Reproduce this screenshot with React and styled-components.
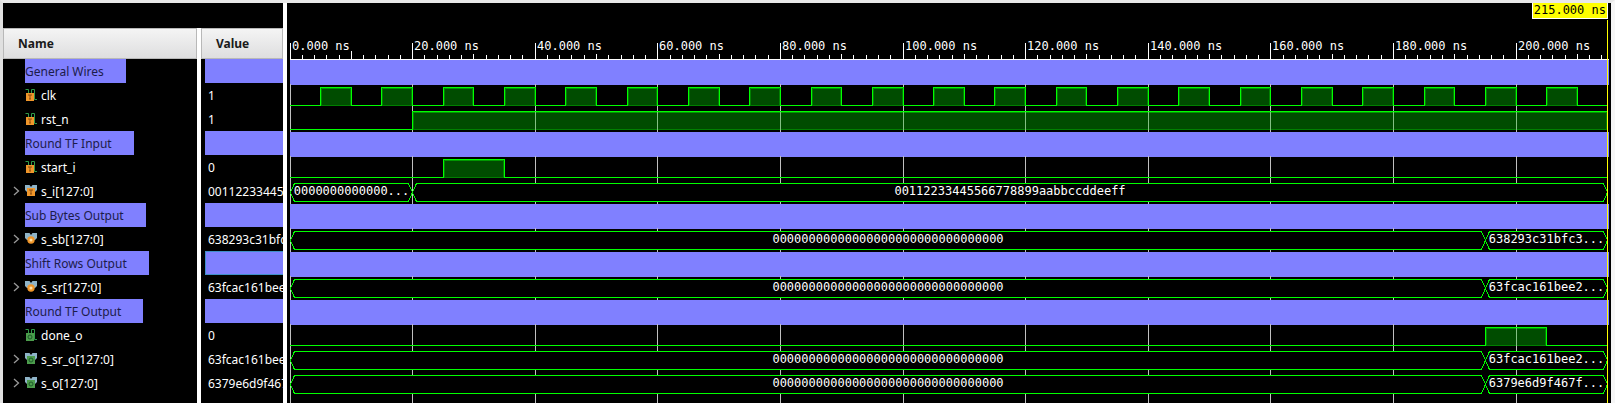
import React, { useLayoutEffect, useRef, useState } from "react";
import styled, { createGlobalStyle, css } from "styled-components";

const END = 215;
const LANE = 24;
const HIGH = 3;
const LOW = 21;
const CHAR = 7;

const clock = Array.from({ length: 42 }, (_, i) => [5 + i * 5, i % 2 === 0 ? 1 : 0]);
const zeros = "0".repeat(32);

const rows = [
  { kind: "group", name: "General Wires" },
  { kind: "wire", name: "clk", dir: "in", value: "1", edges: clock },
  { kind: "wire", name: "rst_n", dir: "in", value: "1", edges: [[20, 1]] },
  { kind: "group", name: "Round TF Input" },
  { kind: "wire", name: "start_i", dir: "in", value: "0", edges: [[25, 1], [35, 0]] },
  {
    kind: "bus", name: "s_i[127:0]", dir: "in", value: "00112233445",
    spans: [[0, 20, zeros], [20, END, "00112233445566778899aabbccddeeff"]],
  },
  { kind: "group", name: "Sub Bytes Output" },
  {
    kind: "bus", name: "s_sb[127:0]", dir: "local", value: "638293c31bfc",
    spans: [[0, 195, zeros], [195, END, "638293c31bfc3000000"]],
  },
  { kind: "group", name: "Shift Rows Output", focused: true },
  {
    kind: "bus", name: "s_sr[127:0]", dir: "local", value: "63fcac161bee",
    spans: [[0, 195, zeros], [195, END, "63fcac161bee2000000"]],
  },
  { kind: "group", name: "Round TF Output" },
  { kind: "wire", name: "done_o", dir: "out", value: "0", edges: [[195, 1], [205, 0]] },
  {
    kind: "bus", name: "s_sr_o[127:0]", dir: "out", value: "63fcac161bee",
    spans: [[0, 195, zeros], [195, END, "63fcac161bee2000000"]],
  },
  {
    kind: "bus", name: "s_o[127:0]", dir: "out", value: "6379e6d9f467",
    spans: [[0, 195, zeros], [195, END, "6379e6d9f467f000000"]],
  },
];

const GlobalStyle = createGlobalStyle`
  * { box-sizing: border-box; }
  body { margin: 0; background: #f0f0f0; font-family: "Noto Sans", sans-serif; }
`;

const Window = styled.main`
  display: flex;
  min-height: 100vh;
  border-top: 3px solid #e8e8e8;
  border-left: 3px solid #e0e0e0;
  border-right: 4px solid #f6f6f6;
  background: #fff;
  gap: 4px;
`;

const SignalPanel = styled.section`
  display: flex;
  flex: 0 0 280px;
  min-width: 0;
  padding-top: 25px;
  background: #000;
`;

const SignalTable = styled.table`
  width: 100%;
  table-layout: fixed;
  border-collapse: separate;
  border-spacing: 0;
  color: #fff;
  font-size: 12px;
  line-height: 26px;
`;

const HeadCell = styled.th`
  width: ${(p) => (p.$wide ? "194px" : "auto")};
  height: 31px;
  padding: 0;
  border-left: ${(p) => (p.$wide ? "0" : "4px solid #fff")};
  text-align: left;
`;

const HeadLabel = styled.div`
  height: 31px;
  padding-left: 14px;
  border: 1px solid #b8b8b8;
  background: linear-gradient(#f4f4f4, #dededf);
  color: #1a1a1a;
  font-weight: 700;
  line-height: 29px;
`;

const NameCell = styled.td`
  height: ${LANE}px;
  padding: 0;
`;

const NameBox = styled.div`
  display: flex;
  align-items: center;
  height: ${LANE}px;
`;

const ValueCell = styled.td`
  height: ${LANE}px;
  padding: 0 0 0 4px;
  border-left: 4px solid #fff;
`;

const ValueBox = styled.div`
  height: ${LANE}px;
  padding-left: 3px;
  overflow: hidden;
  white-space: nowrap;
  ${(p) => p.$band && css`background: #8080ff;`}
  ${(p) => p.$focused && css`
    border: 1px solid #3f8fc8;
    border-right: 0;
  `}
`;

const Filler = styled.tr`
  td { padding: 0; }
  td + td { border-left: 4px solid #fff; }
`;

const Expand = styled.button`
  display: flex;
  align-items: center;
  justify-content: center;
  width: 22px;
  height: ${LANE}px;
  padding: 0 0 0 4px;
  border: 0;
  background: none;
`;

const Indent = styled.span`
  width: 22px;
`;

const GroupName = styled.span`
  height: ${LANE}px;
  padding-right: 22px;
  background: #8080ff;
  color: #1c1c4a;
`;

const SignalName = styled.span`
  height: ${LANE}px;
  padding-left: 4px;
`;

const WavePanel = styled.section`
  flex: 1 1 0;
  min-width: 0;
  display: flex;
  flex-direction: column;
  padding: 0 2px 0 3px;
  background: #000;
  position: relative;
`;

const CursorBar = styled.div`
  display: flex;
  justify-content: flex-end;
  height: 17px;
  padding-right: 1px;
`;

const CursorTime = styled.output`
  height: 16px;
  padding: 0 1px;
  border: 1px solid #fff;
  border-top: 0;
  background: #ffff00;
  color: #000;
  font: 12px/15px "DejaVu Sans Mono", monospace;
`;

const CursorLine = styled.div`
  position: absolute;
  top: 17px;
  bottom: 0;
  right: 3px;
  width: 1px;
  background: #ffff00;
`;

const Chart = styled.svg`
  display: block;
  width: 100%;
  height: ${(p) => p.$height}px;
  shape-rendering: crispEdges;
  text { font: 12px "DejaVu Sans Mono", monospace; fill: #fff; }
`;

const Rest = styled.div`
  flex: 1;
  min-height: 7px;
  overflow: hidden;
`;

const Band = styled.div`
  height: ${LANE}px;
  background: #8080ff;
  box-shadow: 0 1px 0 #8080ff;
`;

const iconColors = {
  in: ["#f0962a", "#8a4c10"],
  local: ["#f0962a", "#ffe0a8"],
  out: ["#4c9c4c", "#1c5a28"],
};

function Badge({ dir, x, y }) {
  const [fill, mark] = iconColors[dir];
  if (dir === "local") {
    return (
      <>
        <circle cx={x + 4} cy={y + 4} r="3.7" fill={fill} />
        <circle cx={x + 4} cy={y + 4} r="1.5" fill={mark} />
      </>
    );
  }
  return (
    <>
      <rect x={x} y={y} width="8" height="8" fill={fill} />
      {dir === "in" ? (
        <path d={`M${x + 2} ${y + 2}h4M${x + 4} ${y + 2}v4M${x + 3} ${y + 6}h2`} stroke={mark} fill="none" />
      ) : (
        <circle cx={x + 4} cy={y + 4} r="2" stroke={mark} fill="none" />
      )}
    </>
  );
}

function SignalIcon({ kind, dir }) {
  return (
    <svg width="12" height="12" viewBox="0 0 12 12" aria-hidden="true">
      {kind === "wire" ? (
        <>
          <path d="M0.5 0.5H3.5V10M6.5 10V0.5H9.5V10.5H12" stroke="#2f9a48" fill="none" />
          <Badge dir={dir} x={1} y={4} />
        </>
      ) : (
        <>
          <path d="M0 0H4.5L6 2L7.5 0H12V5L10 7H2L0 5Z" fill="#8fb4c8" />
          <Badge dir={dir} x={2} y={3} />
        </>
      )}
    </svg>
  );
}

function usePlotWidth() {
  const ref = useRef(null);
  const [width, setWidth] = useState(1000);
  useLayoutEffect(() => {
    const measure = () => setWidth(Math.floor(ref.current.getBoundingClientRect().width));
    measure();
    const observer = new ResizeObserver(measure);
    observer.observe(ref.current);
    return () => observer.disconnect();
  }, []);
  return [ref, width];
}

const scale = (width) => (t) => Math.min(Math.floor((t * (width - 1)) / END), width - 2);

const majors = Array.from({ length: 11 }, (_, i) => i * 20);
const minors = Array.from({ length: 108 }, (_, i) => i * 2);
const halves = Array.from({ length: 11 }, (_, i) => 10 + i * 20);

function Grid({ x, height }) {
  return majors.map((t) => (
    <rect key={t} x={x(t)} y="0" width="1" height={height} fill="#c0c0c0" />
  ));
}

function Ruler({ x, width }) {
  return (
    <Chart $height={40} role="img" aria-label="Time ruler">
      {minors.map((t) => (
        <rect key={t} x={x(t)} y="35" width="1" height="5" fill="#fff" />
      ))}
      {halves.map((t) => {
        const top = t === 10 ? 31 : 34;
        return <rect key={t} x={x(t)} y={top} width="1" height={40 - top} fill="#fff" />;
      })}
      {majors.map((t) => (
        <g key={t}>
          <rect x={x(t)} y="23" width="1" height="17" fill="#fff" />
          <text x={x(t) + 2} y="30">{`${t}.000 ns`}</text>
        </g>
      ))}
      <rect x="0" y="39" width={width} height="1" fill="#fff" />
    </Chart>
  );
}

function WireLane({ row, x }) {
  const points = [[0, 0], ...row.edges.filter(([t]) => t < END)];
  const parts = points.map(([t, level], i) => ({
    level,
    from: x(t),
    to: x(i + 1 < points.length ? points[i + 1][0] : END),
  }));
  return (
    <Chart $height={LANE} role="img" aria-label={row.name}>
      <Grid x={x} height={LANE} />
      {parts.map(({ level, from, to }) =>
        level ? (
          <g key={from}>
            <rect x={from} y={HIGH} width={to - from} height={LOW - HIGH + 1} fill="#004c00" />
            <rect x={from + 1} y={LOW} width={to - from} height="1" fill="#008000" />
            <rect x={from + 1} y={HIGH + 1} width={to - from - 1} height="1" fill="#009800" />
            <rect x={from + 1} y={HIGH + 1} width="1" height={LOW - HIGH} fill="#008000" />
            <rect x={to - 1} y={HIGH + 1} width="1" height={LOW - HIGH} fill="#008000" />
            {majors.filter((t) => x(t) > from && x(t) < to).map((t) => (
              <rect key={t} x={x(t)} y={HIGH + 1} width="1" height={LOW - HIGH} fill="#84c084" />
            ))}
            <rect x={from} y={HIGH} width={to - from + 1} height="1" fill="#00ff00" />
            <rect x={from} y={HIGH} width="1" height={LOW - HIGH + 1} fill="#00ff00" />
            <rect x={to} y={HIGH} width="1" height={LOW - HIGH + 1} fill="#00ff00" />
          </g>
        ) : (
          <rect key={from} x={from} y={LOW} width={to - from + 1} height="1" fill="#00ff00" />
        )
      )}
    </Chart>
  );
}

const fit = (text, room) => {
  const count = Math.floor((room - 6) / CHAR);
  return text.length <= count ? text : `${text.slice(0, Math.max(count - 3, 0))}...`;
};

function BusLane({ row, x }) {
  const mid = (HIGH + LOW + 1) / 2;
  return (
    <Chart $height={LANE} role="img" aria-label={row.name}>
      <Grid x={x} height={LANE} />
      {row.spans.map(([start, end, text]) => {
        const a = x(start) + 0.5;
        const b = x(end) + 0.5;
        const top = HIGH + 0.5;
        const bottom = LOW + 0.5;
        return (
          <g key={start}>
            <path
              d={`M${a} ${mid}L${a + 4} ${top}H${b - 4}L${b} ${mid}L${b - 4} ${bottom}H${a + 4}Z`}
              fill="#000"
              stroke="#00ff00"
            />
            <text x={(a + b) / 2} y="15" textAnchor="middle">{fit(text, b - a)}</text>
          </g>
        );
      })}
    </Chart>
  );
}

function Lane({ row, x }) {
  if (row.kind === "group") return <Band />;
  return row.kind === "wire" ? <WireLane row={row} x={x} /> : <BusLane row={row} x={x} />;
}

function SignalRow({ row }) {
  const group = row.kind === "group";
  return (
    <tr>
      <NameCell>
        <NameBox>
          {row.kind === "bus" ? (
            <Expand aria-label={`Expand ${row.name}`}>
              <svg width="7" height="10" viewBox="0 0 7 10" aria-hidden="true">
                <path d="M1 1L5.5 5L1 9" stroke="#9a9a9a" strokeWidth="1.3" fill="none" />
              </svg>
            </Expand>
          ) : (
            <Indent />
          )}
          {group ? (
            <GroupName>{row.name}</GroupName>
          ) : (
            <>
              <SignalIcon kind={row.kind} dir={row.dir} />
              <SignalName>{row.name}</SignalName>
            </>
          )}
        </NameBox>
      </NameCell>
      <ValueCell>
        <ValueBox $band={group} $focused={row.focused}>{row.value}</ValueBox>
      </ValueCell>
    </tr>
  );
}

export default function App() {
  const [plotRef, width] = usePlotWidth();
  const x = scale(width);
  return (
    <>
      <GlobalStyle />
      <Window>
        <SignalPanel>
          <SignalTable>
            <thead>
              <tr>
                <HeadCell $wide scope="col"><HeadLabel>Name</HeadLabel></HeadCell>
                <HeadCell scope="col"><HeadLabel>Value</HeadLabel></HeadCell>
              </tr>
            </thead>
            <tbody>
              {rows.map((row) => <SignalRow key={row.name} row={row} />)}
              <Filler><td /><td /></Filler>
            </tbody>
          </SignalTable>
        </SignalPanel>
        <WavePanel>
          <CursorBar><CursorTime>215.000 ns</CursorTime></CursorBar>
          <div ref={plotRef}>
            <Ruler x={x} width={width} />
            {rows.map((row) => <Lane key={row.name} row={row} x={x} />)}
          </div>
          <Rest>
            <Chart $height={7} aria-hidden="true"><Grid x={x} height={7} /></Chart>
          </Rest>
          <CursorLine />
        </WavePanel>
      </Window>
    </>
  );
}
